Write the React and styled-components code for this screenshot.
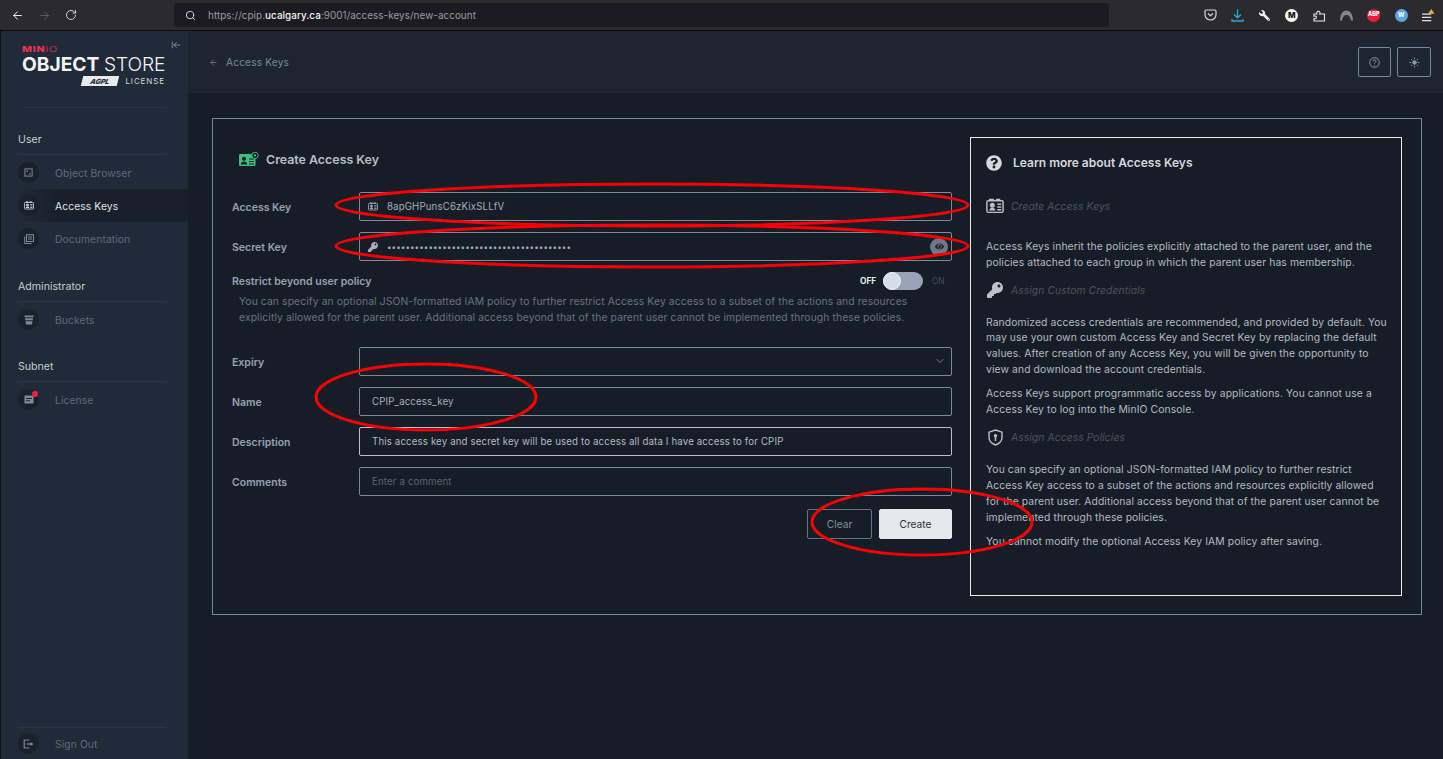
import React from 'react'
import styled, { createGlobalStyle } from 'styled-components'
import { ArrowLeft, ArrowRight, RotateCw, Search, ChevronDown, Sun, ArrowLeftToLine } from 'lucide-react'
import { FaKey, FaQuestionCircle, FaEye, FaWrench } from 'react-icons/fa'

const GlobalStyle = createGlobalStyle`
  html, body {
    margin: 0;
    padding: 0;
    background: #171d27;
    font-family: Inter, "Liberation Sans", sans-serif;
    overflow: hidden;
  }
  * { box-sizing: border-box; }
`

const Page = styled.div`
  position: relative;
  width: 1443px;
  height: 759px;
  overflow: hidden;
  display: flex;
  flex-direction: column;
`

/* browser chrome */
const BrowserBar = styled.div`
  height: 31px;
  flex: none;
  display: flex;
  align-items: center;
  background: #2b2b2e;
  border-bottom: 1px solid #0c0c0e;
  color: #f2f2f2;
`

const NavButtons = styled.div`
  width: 174px;
  flex: none;
  display: flex;
  align-items: center;
  gap: 14px;
  padding-left: 11px;
`

const AddressBar = styled.div`
  width: 935px;
  height: 24px;
  flex: none;
  display: flex;
  align-items: center;
  padding-left: 11px;
  gap: 12px;
  border-radius: 3px;
  background: #1c1b21;
  font-size: 9.9px;
  color: #9b9ba0;
  letter-spacing: 0.06px;

  b {
    font-weight: 500;
    color: #f4f4f5;
  }
`

const Extensions = styled.div`
  flex: 1;
  display: flex;
  align-items: center;
  padding-left: 94.5px;
  gap: 14.3px;
`

const ExtSlot = styled.div`
  position: relative;
  width: 13px;
  height: 13px;
  display: flex;
  align-items: center;
  justify-content: center;
`

const RoundBadge = styled.span`
  width: 13px;
  height: 13px;
  flex: none;
  border-radius: 50%;
  display: flex;
  align-items: center;
  justify-content: center;
  background: ${p => p.$bg};
  color: ${p => p.$color || '#fff'};
  font-size: ${p => p.$size || 6}px;
  font-weight: 800;
  line-height: 1;
`

const Body = styled.div`
  flex: 1;
  min-height: 0;
  display: flex;
`

/* sidebar */
const Sidebar = styled.aside`
  width: 188px;
  flex: none;
  display: flex;
  flex-direction: column;
  background: #212a38;
  border-left: 1px solid #0d1015;
`

const LogoBlock = styled.div`
  position: relative;
  height: 77px;
  margin: 0 22px 0 21px;
  padding-top: 14px;
  border-bottom: 1px solid #283443;
`

const Collapse = styled.span`
  position: absolute;
  top: 9px;
  right: -15px;
  color: #aab2bf;
  display: flex;
`

const MinioMark = styled.div`
  font-size: 8px;
  line-height: 9px;
  font-weight: 800;
  letter-spacing: 0.6px;
  color: #f0304e;
  transform: scaleX(1.32);
  transform-origin: left;

  span {
    font-weight: 300;
  }
`

const ObjectStore = styled.div`
  margin-top: -1px;
  font-size: 19.2px;
  line-height: 22px;
  font-weight: 700;
  color: #f4f5f7;
  white-space: nowrap;

  span {
    font-weight: 300;
    letter-spacing: -0.1px;
  }
`

const LicenseRow = styled.div`
  display: flex;
  justify-content: flex-end;
  align-items: center;
  gap: 7px;
  height: 12px;
  margin-right: 1px;
  font-size: 8px;
  letter-spacing: 0.9px;
  color: #d6d9de;
`

const AgplBadge = styled.i`
  width: 36px;
  height: 10px;
  display: flex;
  align-items: center;
  justify-content: center;
  background: #e8e9eb;
  color: #2b3442;
  font-size: 7px;
  font-weight: 900;
  letter-spacing: 0;
  transform: skewX(-14deg);
`

const NavSection = styled.div`
  margin-top: ${p => p.$top}px;
`

const SectionTitle = styled.div`
  margin: 0 22px 0 17px;
  padding-bottom: 7px;
  border-bottom: 1px solid #2a3645;
  font-size: 10.6px;
  line-height: 14px;
  color: #c6cad1;
  box-sizing: content-box;
  height: 14px;
`

const NavList = styled.div`
  padding-top: 1px;
`

const NavItem = styled.div`
  height: 33px;
  display: flex;
  align-items: center;
  padding-left: 17px;
  gap: 16px;
  font-size: 10.3px;
  letter-spacing: 0.1px;
  color: ${p => (p.$active ? '#dfe2e7' : '#5e6a7b')};
  background: ${p => (p.$active ? 'linear-gradient(90deg, #212a38 8%, #19202b 30%)' : 'transparent')};
`

const NavIcon = styled.span`
  position: relative;
  width: 21px;
  height: 21px;
  flex: none;
  border-radius: 50%;
  display: flex;
  align-items: center;
  justify-content: center;
  background: #1a212d;
  color: ${p => (p.$active ? '#d5d9df' : '#7e8896')};
`

const Dot = styled.span`
  position: absolute;
  top: 2px;
  right: 1px;
  width: 6px;
  height: 6px;
  border-radius: 50%;
  background: #f5203f;
`

const SignOut = styled.div`
  margin: auto 22px 0 17px;
  border-top: 1px solid #2a3645;
  height: 32px;
  display: flex;
  align-items: center;
  gap: 16px;
  font-size: 10.3px;
  letter-spacing: 0.1px;
  color: #5e6a7b;
`

/* main column */
const Main = styled.main`
  flex: 1;
  min-width: 0;
  display: flex;
  flex-direction: column;
  background: #171d27;
`

const Header = styled.header`
  height: 62px;
  flex: none;
  display: flex;
  align-items: center;
  background: #1e2531;
  padding: 0 12px 0 21px;
`

const BackLink = styled.div`
  display: flex;
  align-items: center;
  gap: 8px;
  font-size: 10.1px;
  letter-spacing: 0.2px;
  color: #7d8796;
`

const HeaderActions = styled.div`
  margin-left: auto;
  display: flex;
  gap: 6px;
`

const SquareButton = styled.div`
  width: ${p => p.$w}px;
  height: 30px;
  display: flex;
  align-items: center;
  justify-content: center;
  border: 1px solid #7d879b;
  border-radius: 2px;
  color: #8e98aa;
`

const Content = styled.div`
  padding: 25px 21px 0 24px;
`

const Panel = styled.section`
  height: 497px;
  display: grid;
  grid-template-columns: 1fr 432px;
  column-gap: 18px;
  padding: 18px 19px 19px 19px;
  border: 1px solid #7c8594;
`

const FormColumn = styled.div`
  display: flex;
  flex-direction: column;
`

const FormTitle = styled.h2`
  margin: 14px 0 25px 7px;
  height: 16px;
  display: flex;
  align-items: center;
  gap: 7px;
  font-size: 12.4px;
  font-weight: 600;
  color: #b9bfc9;
`

const Row = styled.div`
  display: flex;
  align-items: center;
  margin-bottom: 11px;
`

const Label = styled.label`
  width: 127px;
  flex: none;
  padding-top: 2px;
  font-size: 10.5px;
  font-weight: 600;
  color: #97a1b1;
`

const Field = styled.div`
  flex: 1;
  height: 29px;
  display: flex;
  align-items: center;
  gap: 9px;
  padding: 0 0 0 ${p => (p.$icon ? 8 : 12)}px;
  border: 1px solid ${p => p.$border || '#7f8899'};
  border-radius: 2px;
  font-size: 9.66px;
  letter-spacing: 0.15px;
  color: ${p => p.$color || '#a7aeba'};
`

const FieldIcon = styled.span`
  width: 10px;
  display: flex;
  justify-content: center;
  color: #a7aeba;
`

const EyeBubble = styled.span`
  width: 18px;
  height: 18px;
  margin-left: auto;
  margin-right: 3px;
  border-radius: 50%;
  display: flex;
  align-items: center;
  justify-content: center;
  background: #6f7888;
  color: #1b212b;
`

const Secret = styled.span`
  letter-spacing: 0.1px;
  font-size: 8px;
`

const RestrictRow = styled.div`
  display: flex;
  align-items: center;
  height: 18px;
  margin-bottom: 4px;
`

const RestrictLabel = styled.div`
  flex: 1;
  font-size: 10.6px;
  font-weight: 600;
  color: #97a1b1;
`

const ToggleText = styled.span`
  width: ${p => p.$w}px;
  font-size: 8.3px;
  font-weight: ${p => (p.$on ? 700 : 400)};
  color: ${p => (p.$on ? '#e8eaee' : '#464e5b')};
`

const Track = styled.span`
  width: 40px;
  height: 18px;
  margin: 0 9px 0 6px;
  border-radius: 9px;
  background: #98a3b6;
  display: flex;
  align-items: center;
`

const Thumb = styled.span`
  width: 18px;
  height: 18px;
  border-radius: 50%;
  background: #d5ddeb;
  border: 1px solid #eef1f6;
`

const RestrictHelp = styled.p`
  margin: 0 16px 21px 7px;
  font-size: 10.35px;
  line-height: 15.8px;
  letter-spacing: 0.1px;
  color: #687282;
`

const Actions = styled.div`
  display: flex;
  justify-content: flex-end;
  gap: 7px;
  margin-top: 2px;
`

const Btn = styled.button`
  width: ${p => p.$w}px;
  height: 30px;
  padding: 0;
  border-radius: 2px;
  font-family: inherit;
  font-size: 10.2px;
  border: 1px solid ${p => (p.$primary ? '#e3e8e9' : '#677284')};
  background: ${p => (p.$primary ? '#e3e8e9' : 'transparent')};
  color: ${p => (p.$primary ? '#2b323c' : '#838c9a')};
`

const HelpBox = styled.aside`
  height: 459px;
  padding: 16px 13px 0 15px;
  border: 1px solid #e9ebee;
  background: #171d27;
`

const HelpTitle = styled.h3`
  margin: 0 0 25px;
  height: 17px;
  display: flex;
  align-items: center;
  gap: 11px;
  font-size: 12px;
  font-weight: 600;
  color: #d5d9de;
`

const HelpHeading = styled.div`
  display: flex;
  align-items: center;
  gap: 7px;
  height: 20px;
  margin: ${p => p.$top || 0}px 0 ${p => p.$bottom || 0}px;
  font-size: 10.3px;
  font-style: italic;
  letter-spacing: 0.1px;
  color: #4e535b;
`

const HeadingIcon = styled.span`
  width: 18px;
  flex: none;
  display: flex;
  justify-content: center;
  color: #bcc1c8;
`

const HelpText = styled.p`
  margin: 0 0 8px;
  font-size: 10.35px;
  line-height: 15.8px;
  letter-spacing: 0.1px;
  color: #b4b9c0;
`

const Annotations = styled.svg`
  position: absolute;
  left: 0;
  top: 0;
  pointer-events: none;
`

const CardIcon = ({ size = 12 }) => (
  <svg width={size} height={size * 0.85} viewBox="0 0 20 17" fill="none" stroke="currentColor" strokeWidth="1.6">
    <rect x="1" y="3" width="18" height="13" rx="1.5" />
    <path d="M4 3V1.5h4V3M11 1.5h4V3" />
    <circle cx="7" cy="8" r="2" fill="currentColor" />
    <path d="M3.5 14c.3-2.4 1.6-3.2 3.5-3.2s3.2.8 3.5 3.2z" fill="currentColor" stroke="none" />
    <path d="M12.5 7H17M12.5 10H17M12.5 13H17" />
  </svg>
)

const GreenKeyIcon = () => (
  <svg width="20" height="14" viewBox="0 0 20 14">
    <rect x="0" y="2" width="16.5" height="12" rx="1.2" fill="#3fbf80" />
    <circle cx="5" cy="6.8" r="2" fill="#171d27" />
    <path d="M1.8 12.5c.2-2.3 1.4-3 3.2-3s3 .7 3.2 3z" fill="#171d27" />
    <path d="M10 7h5M10 9.5h5M10 12h5" stroke="#171d27" strokeWidth="1.1" />
    <circle cx="16" cy="3.4" r="3.2" fill="#171d27" stroke="#3fbf80" strokeWidth="0.9" />
    <circle cx="16" cy="3.4" r="1.1" fill="#3fbf80" />
  </svg>
)

const ShieldIcon = () => (
  <svg width="15" height="17" viewBox="0 0 15 17" fill="none" stroke="currentColor" strokeWidth="1.4">
    <path d="M7.5 1 14 3.2v5c0 3.7-2.6 6.3-6.5 7.8C3.6 14.5 1 11.9 1 8.2v-5z" />
    <circle cx="7.5" cy="6.8" r="1.7" fill="currentColor" stroke="none" />
    <path d="M7.5 8v4" strokeWidth="1.5" />
  </svg>
)

const BrowserIcon = () => (
  <svg width="9" height="9" viewBox="0 0 10 10" fill="none" stroke="currentColor" strokeWidth="1.1">
    <rect x="1" y="1" width="8" height="8" />
    <rect x="2.8" y="2.8" width="1.6" height="1.6" fill="currentColor" stroke="none" />
    <rect x="5.6" y="5.6" width="1.6" height="1.6" fill="currentColor" stroke="none" />
  </svg>
)

const DocsIcon = () => (
  <svg width="10" height="10" viewBox="0 0 10 10" fill="none" stroke="currentColor" strokeWidth="1">
    <rect x="2.5" y="0.7" width="7" height="6.8" />
    <path d="M0.7 2.5v7h7M4 3h4M4 5h4" />
  </svg>
)

const BucketIcon = () => (
  <svg width="10" height="10" viewBox="0 0 10 10" fill="currentColor">
    <path d="M0.5 0.5h9v1.8h-9zM1 3.2h8l-.3 2H1.3zM1.5 6.2h7l-.6 3.3H2.1z" />
  </svg>
)

const LicenseIcon = () => (
  <svg width="10" height="9" viewBox="0 0 10 9" fill="currentColor">
    <path d="M0.5 0.5h9v8h-9zM2 3v1h6V3zM2 5.2v1h4v-1z" fillRule="evenodd" />
  </svg>
)

const SignOutIcon = () => (
  <svg width="11" height="10" viewBox="0 0 11 10" fill="none" stroke="currentColor" strokeWidth="1.2">
    <path d="M6.5 1H1.2v8h5.3" />
    <path d="M3.5 5h5" />
    <path d="M7.5 3l3 2-3 2z" fill="currentColor" stroke="none" />
  </svg>
)

const PocketIcon = () => (
  <svg width="13" height="12" viewBox="0 0 13 12" fill="none" stroke="#d8d8da" strokeWidth="1.2">
    <path d="M1 2.2C1 1.5 1.5 1 2.2 1h8.6c.7 0 1.2.5 1.2 1.2v3.3C12 8.7 9.5 11 6.5 11S1 8.7 1 5.5z" />
    <path d="M4 4.5l2.5 2.3L9 4.5" />
  </svg>
)

const DownloadIcon = () => (
  <svg width="13" height="13" viewBox="0 0 13 13" fill="none" stroke="#27a9d3" strokeWidth="1.3">
    <path d="M6.5 0.5v8M3 5.5l3.5 3.3L10 5.5M1 10v2h11v-2" />
  </svg>
)

const PuzzleIcon = () => (
  <svg width="13" height="13" viewBox="0 0 13 13" fill="none" stroke="#e6e6e8" strokeWidth="1.1">
    <path d="M1 5h2.8c-.9-2.8 3-3.8 3.2-1.2 0 .5-.2.9-.4 1.2H11.500v7H1V9.500c1.800.7 2.800-.4 2.400-1.600C3 6.900 2 6.800 1 7.200z" />
  </svg>
)

const ArchIcon = () => (
  <svg width="13" height="11" viewBox="0 0 13 11" fill="#85858a">
    <path d="M0 10.5C0 4.500 2.700 0.500 6.500 0.500S13 4.500 13 10.500h-2C10.600 7 8.800 5 6.500 5S2.400 7 2 10.500z" />
  </svg>
)

const MenuIcon = () => (
  <svg width="14" height="15" viewBox="0 0 14 15">
    <path d="M0 6h10M0 9.5h10M0 13h10" stroke="#e2e2e4" strokeWidth="1.3" />
    <path d="M10 0.5l3.5 5h-7z" fill="#f5a83a" />
  </svg>
)

const navIcons = {
  browser: <BrowserIcon />,
  keys: <CardIcon size={10} />,
  docs: <DocsIcon />,
  buckets: <BucketIcon />,
  license: <LicenseIcon />
}

const NavEntry = ({ icon, label, active, dot }) => (
  <NavItem $active={active}>
    <NavIcon $active={active}>
      {navIcons[icon]}
      {dot && <Dot />}
    </NavIcon>
    {label}
  </NavItem>
)

export default function App() {
  return (
    <Page>
      <GlobalStyle />
      <BrowserBar>
        <NavButtons>
          <ArrowLeft size={13} strokeWidth={1.8} />
          <ArrowRight size={13} strokeWidth={1.5} color="#66666a" />
          <RotateCw size={12} strokeWidth={1.6} />
        </NavButtons>
        <AddressBar>
          <Search size={11} strokeWidth={2} color="#e4e4e6" />
          <span>https://cpip.<b>ucalgary.ca</b>:9001/access-keys/new-account</span>
        </AddressBar>
        <Extensions>
          <ExtSlot><PocketIcon /></ExtSlot>
          <ExtSlot><DownloadIcon /></ExtSlot>
          <ExtSlot><FaWrench size={11} color="#ececee" style={{ transform: 'scaleX(-1)' }} /></ExtSlot>
          <ExtSlot><RoundBadge $bg="#f4f4f4" $color="#111" $size={8}>M</RoundBadge></ExtSlot>
          <ExtSlot><PuzzleIcon /></ExtSlot>
          <ExtSlot><ArchIcon /></ExtSlot>
          <ExtSlot><RoundBadge $bg="#ec1c3f" $size={5.5}>ABP</RoundBadge></ExtSlot>
          <ExtSlot><RoundBadge $bg="#5aa6e8" $size={6}>W</RoundBadge></ExtSlot>
          <ExtSlot><MenuIcon /></ExtSlot>
        </Extensions>
      </BrowserBar>

      <Body>
        <Sidebar>
          <LogoBlock>
            <Collapse><ArrowLeftToLine size={10} strokeWidth={1.5} /></Collapse>
            <MinioMark>MIN<span>IO</span></MinioMark>
            <ObjectStore>OBJECT <span>STORE</span></ObjectStore>
            <LicenseRow><AgplBadge>AGPL</AgplBadge>LICENSE</LicenseRow>
          </LogoBlock>

          <NavSection $top={25}>
            <SectionTitle>User</SectionTitle>
            <NavList>
              <NavEntry icon="browser" label="Object Browser" />
              <NavEntry icon="keys" label="Access Keys" active />
              <NavEntry icon="docs" label="Documentation" />
            </NavList>
          </NavSection>

          <NavSection $top={25}>
            <SectionTitle>Administrator</SectionTitle>
            <NavList>
              <NavEntry icon="buckets" label="Buckets" />
            </NavList>
          </NavSection>

          <NavSection $top={24}>
            <SectionTitle>Subnet</SectionTitle>
            <NavList>
              <NavEntry icon="license" label="License" dot />
            </NavList>
          </NavSection>

          <SignOut>
            <NavIcon><SignOutIcon /></NavIcon>
            Sign Out
          </SignOut>
        </Sidebar>

        <Main>
          <Header>
            <BackLink>
              <ArrowLeft size={9} strokeWidth={2} />
              Access Keys
            </BackLink>
            <HeaderActions>
              <SquareButton $w={33}>
                <svg width="11" height="11" viewBox="0 0 11 11" fill="none" stroke="currentColor" strokeWidth="1">
                  <circle cx="5.5" cy="5.5" r="4.8" />
                  <path d="M4 4.3c0-2 3.1-1.900 3 0 0 1.100-1.500 1.100-1.500 2.300M5.500 7.800v.8" />
                </svg>
              </SquareButton>
              <SquareButton $w={34}><Sun size={11} strokeWidth={2} fill="currentColor" /></SquareButton>
            </HeaderActions>
          </Header>

          <Content>
            <Panel>
              <FormColumn>
                <FormTitle><GreenKeyIcon />Create Access Key</FormTitle>
                <Row>
                  <Label>Access Key</Label>
                  <Field $icon>
                    <FieldIcon><CardIcon size={10} /></FieldIcon>
                    8apGHPunsC6zKixSLLfV
                  </Field>
                </Row>
                <Row>
                  <Label>Secret Key</Label>
                  <Field $icon>
                    <FieldIcon><FaKey size={10} /></FieldIcon>
                    <Secret>{'•'.repeat(40)}</Secret>
                    <EyeBubble><FaEye size={9} /></EyeBubble>
                  </Field>
                </Row>
                <RestrictRow>
                  <RestrictLabel>Restrict beyond user policy</RestrictLabel>
                  <ToggleText $w={17} $on>OFF</ToggleText>
                  <Track><Thumb /></Track>
                  <ToggleText $w={20}>ON</ToggleText>
                </RestrictRow>
                <RestrictHelp>
                  You can specify an optional JSON-formatted IAM policy to further restrict Access Key access to a subset of the actions and resources explicitly allowed for the parent user. Additional access beyond that of the parent user cannot be implemented through these policies.
                </RestrictHelp>
                <Row>
                  <Label>Expiry</Label>
                  <Field>
                    <ChevronDown size={12} strokeWidth={1.5} color="#9aa3b1" style={{ marginLeft: 'auto', marginRight: 5 }} />
                  </Field>
                </Row>
                <Row>
                  <Label>Name</Label>
                  <Field>CPIP_access_key</Field>
                </Row>
                <Row>
                  <Label>Description</Label>
                  <Field $border="#bcc1c9" $color="#b4bac4">This access key and secret key will be used to access all data I have access to for CPIP</Field>
                </Row>
                <Row>
                  <Label>Comments</Label>
                  <Field $color="#5a6371">Enter a comment</Field>
                </Row>
                <Actions>
                  <Btn $w={65}>Clear</Btn>
                  <Btn $w={73} $primary>Create</Btn>
                </Actions>
              </FormColumn>

              <HelpBox>
                <HelpTitle>
                  <FaQuestionCircle size={16} color="#d5d9de" />
                  Learn more about Access Keys
                </HelpTitle>
                <HelpHeading $bottom={23}>
                  <HeadingIcon><CardIcon size={18} /></HeadingIcon>
                  Create Access Keys
                </HelpHeading>
                <HelpText>
                  Access Keys inherit the policies explicitly attached to the parent user, and the policies attached to each group in which the parent user has membership.
                </HelpText>
                <HelpHeading $top={9} $bottom={15}>
                  <HeadingIcon><FaKey size={16} /></HeadingIcon>
                  Assign Custom Credentials
                </HelpHeading>
                <HelpText>
                  Randomized access credentials are recommended, and provided by default. You may use your own custom Access Key and Secret Key by replacing the default values. After creation of any Access Key, you will be given the opportunity to view and download the account credentials.
                </HelpText>
                <HelpText>
                  Access Keys support programmatic access by applications. You cannot use a Access Key to log into the MinIO Console.
                </HelpText>
                <HelpHeading $top={10} $bottom={15}>
                  <HeadingIcon><ShieldIcon /></HeadingIcon>
                  Assign Access Policies
                </HelpHeading>
                <HelpText>
                  You can specify an optional JSON-formatted IAM policy to further restrict Access Key access to a subset of the actions and resources explicitly allowed for the parent user. Additional access beyond that of the parent user cannot be implemented through these policies.
                </HelpText>
                <HelpText>
                  You cannot modify the optional Access Key IAM policy after saving.
                </HelpText>
              </HelpBox>
            </Panel>
          </Content>
        </Main>
      </Body>

      <Annotations width="1443" height="759" fill="none" stroke="#f80000" strokeWidth="3">
        <ellipse cx="652" cy="205" rx="316" ry="21" />
        <ellipse cx="652" cy="246" rx="316" ry="21" />
        <ellipse cx="426" cy="397" rx="110" ry="33" />
        <ellipse cx="922" cy="522" rx="110" ry="33" />
      </Annotations>
    </Page>
  )
}
